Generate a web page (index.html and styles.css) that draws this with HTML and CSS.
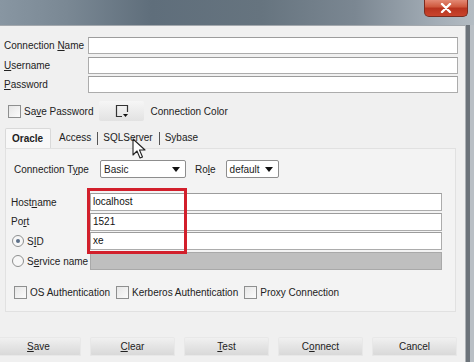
FILE: index.html
```html
<!DOCTYPE html>
<html lang="en">
  <head>
    <meta charset="UTF-8" />
    <meta name="viewport" content="width=device-width, initial-scale=1.0" />
    <title>New / Select Database Connection</title>
    <link rel="stylesheet" href="styles.css">
  </head>
  <body>
    <div class="window">
      <div class="titlebar">
        <div class="close-btn">
          <svg width="12" height="10" viewBox="0 0 12 10">
            <path d="M2 1 L10 9 M10 1 L2 9" stroke="#fff" stroke-width="2.4" stroke-linecap="round" />
          </svg>
        </div>
      </div>

      <div class="frame">
        <div class="dialog">
          <div class="conn-grid">
            <label>Connection <u>N</u>ame</label>
            <div class="field"></div>
            <label><u>U</u>sername</label>
            <div class="field"></div>
            <label><u>P</u>assword</label>
            <div class="field"></div>
          </div>

          <div class="save-row">
            <span class="check"></span>
            <span class="save-label">Sa<u>v</u>e Password</span>
            <div class="color-btn">
              <svg width="14" height="14" viewBox="0 0 14 14">
                <path d="M7 12.5 H1.5 V1.5 H12.5 V8" fill="none" stroke="#333" stroke-width="1.2" />
                <path d="M8 10 H13 L10.5 13 Z" fill="#111" />
              </svg>
            </div>
            <span>Connection Color</span>
          </div>

          <div class="tabs">
            <div class="tab active">Oracle</div>
            <div class="tab">Access</div>
            <div class="tab sep">SQLServer</div>
            <div class="tab sep">Sybase</div>
          </div>

          <div class="tab-panel">
            <div class="type-row">
              <label class="type-label">Connection T<u>y</u>pe</label>
              <div class="select basic">
                <span>Basic</span>
                <svg width="8" height="5" viewBox="0 0 8 5"><path d="M0 0 H8 L4 5 Z" fill="#111" /></svg>
              </div>
              <label class="role-label">Ro<u>l</u>e</label>
              <div class="select role">
                <span>default</span>
                <svg width="8" height="5" viewBox="0 0 8 5"><path d="M0 0 H8 L4 5 Z" fill="#111" /></svg>
              </div>
            </div>

            <div class="host-grid">
              <label>Host<u>n</u>ame</label>
              <div class="field">localhost</div>
              <label>Po<u>r</u>t</label>
              <div class="field">1521</div>
              <label class="radio-label"><span class="radio on"></span>S<u>I</u>D</label>
              <div class="field">xe</div>
              <label class="radio-label"><span class="radio"></span>S<u>e</u>rvice name</label>
              <div class="field disabled"></div>
            </div>

            <div class="auth-row">
              <span class="check"></span><span>OS Authentication</span>
              <span class="check"></span><span>Kerberos Authentication</span>
              <span class="check"></span><span>Proxy Connection</span>
            </div>

            <div class="highlight"></div>
          </div>

          <div class="buttons">
            <div class="btn"><u>S</u>ave</div>
            <div class="btn"><u>C</u>lear</div>
            <div class="btn"><u>T</u>est</div>
            <div class="btn">C<u>o</u>nnect</div>
            <div class="btn">Cancel</div>
          </div>
        </div>
        <div class="frame-edge"></div>
      </div>

      <svg class="cursor" width="14" height="22" viewBox="0 0 14 22">
        <path d="M1 1 V17 L5 13 L8 20 L10.5 19 L7.5 12 H13 Z" fill="#fff" stroke="#222" stroke-width="1.1" stroke-linejoin="round" />
      </svg>
    </div>
  </body>
</html>
```

FILE: styles.css
```css
body {
  margin: 0;
  padding: 0;
  font-family: "Liberation Sans", Arial, sans-serif;
  font-size: 10px;
  color: #222;
}
label,
span,
.tab,
.btn {
  white-space: nowrap;
}
u {
  text-decoration-thickness: 1px;
  text-underline-offset: 1px;
}
.window {
  position: relative;
  width: 474px;
  height: 362px;
  overflow: hidden;
  background: #c4cad0;
}
.titlebar {
  height: 25px;
  background: linear-gradient(90deg, #8896a2 0%, #7a8894 14%, #5f6e7b 32%, #66747f 55%, #7b8792 75%, #a3adb6 92%, #b4bcc3 100%);
  position: relative;
}
.close-btn {
  position: absolute;
  left: 424px;
  top: -1px;
  width: 42px;
  height: 17px;
  border: 1px solid #7c2b1e;
  border-top: none;
  border-radius: 0 0 5px 5px;
  background: linear-gradient(#e6907c, #cf5a3f 45%, #b8341f 55%, #c9442c);
  display: flex;
  align-items: center;
  justify-content: center;
}
.frame {
  display: flex;
  height: 337px;
}
.dialog {
  width: 465px;
  background: #f0f0f0;
  border-top: 1px solid #a4a9ae;
  border-right: 1px solid #aeb2b6;
  overflow: hidden;
}
.frame-edge {
  width: 8px;
  background: linear-gradient(90deg, #6c737a 0, #6c737a 4px, #b9bfc5 4px);
}
.conn-grid {
  display: grid;
  grid-template-columns: 84px 1fr;
  grid-auto-rows: 17px;
  row-gap: 2.5px;
  margin-top: 11px;
  padding: 0 7px 0 4px;
  align-items: center;
}
.field {
  height: 100%;
  box-sizing: border-box;
  background: #fff;
  border: 1px solid #acacac;
  border-top-color: #9c9c9c;
  padding: 0 2px;
  line-height: 15px;
  color: #111;
}
.field.disabled {
  background: #bfbfbf;
  border-color: #a9a9a9;
}
.save-row {
  display: flex;
  align-items: center;
  margin-top: 8px;
  padding-left: 8px;
  height: 20px;
}
.check {
  width: 11px;
  height: 11px;
  border: 1px solid #8e8f8f;
  background: linear-gradient(135deg, #e6e6e6, #fbfbfb);
  margin-right: 3px;
  flex: none;
}
.save-label {
  margin-right: 6px;
}
.color-btn {
  width: 45px;
  height: 20px;
  box-sizing: border-box;
  border-radius: 2px;
  background: linear-gradient(#f6f6f6, #e2e2e2);
  display: flex;
  align-items: center;
  justify-content: center;
  margin-right: 6px;
}
.tabs {
  display: flex;
  align-items: flex-end;
  margin-top: 7px;
  padding-left: 5px;
  height: 20px;
}
.tab {
  height: 20px;
  line-height: 20px;
  padding: 0 6px;
  position: relative;
}
.tab.active {
  width: 46px;
  box-sizing: border-box;
  padding: 0 6px;
  font-weight: bold;
  border: 1px solid #d9d9d9;
  border-bottom: none;
  border-radius: 2px 2px 0 0;
  background: #f8f8f8;
  margin-right: 2px;
}
.tab.sep::before {
  content: "";
  position: absolute;
  left: 0;
  top: 4px;
  height: 13px;
  border-left: 1px solid #555;
}
.tab-panel {
  position: relative;
  height: 164px;
  box-sizing: border-box;
  margin: 0 9px 0 5px;
  border: 1px solid #e1e1e1;
  background: #f3f3f3;
  padding-top: 11px;
}
.type-row {
  display: flex;
  align-items: center;
  height: 18px;
  padding-left: 8px;
}
.type-label {
  width: 86px;
}
.select {
  height: 18px;
  box-sizing: border-box;
  background: #fff;
  border: 1px solid #8d8d8d;
  border-radius: 2px;
  display: flex;
  align-items: center;
  justify-content: space-between;
  padding: 0 5px 0 3px;
}
.select.basic {
  width: 86px;
}
.role-label {
  margin: 0 10px 0 9px;
}
.select.role {
  width: 53px;
}
.host-grid {
  display: grid;
  grid-template-columns: 79px 1fr;
  grid-auto-rows: 18px;
  row-gap: 1.7px;
  margin: 15px 13px 0 5px;
  align-items: center;
}
.radio-label {
  display: flex;
  align-items: center;
}
.radio {
  width: 10px;
  height: 10px;
  border: 1px solid #8e8f8f;
  border-radius: 50%;
  background: #f7f7f7;
  margin: 0 3px 0 1px;
  position: relative;
}
.radio.on::after {
  content: "";
  position: absolute;
  left: 3px;
  top: 3px;
  width: 4px;
  height: 4px;
  border-radius: 50%;
  background: #5c6f88;
}
.auth-row {
  display: flex;
  align-items: center;
  margin-top: 16px;
  padding-left: 8px;
  height: 13px;
}
.auth-row .check + span {
  margin-right: 6px;
}
.highlight {
  position: absolute;
  left: 81px;
  top: 39px;
  width: 100px;
  height: 66px;
  box-sizing: border-box;
  border: 3px solid #d21f2b;
}
.buttons {
  display: flex;
  justify-content: flex-end;
  gap: 9px;
  margin-top: 25px;
  padding-right: 8px;
}
.btn {
  flex: none;
  width: 85px;
  height: 19px;
  line-height: 19px;
  text-align: center;
  border-radius: 2px;
  background: linear-gradient(#f2f2f2, #e4e4e4 50%, #d8d8d8);
  box-shadow: inset 0 0 0 1px #e8e8e8;
}
.cursor {
  position: absolute;
  left: 132px;
  top: 138px;
}
```
